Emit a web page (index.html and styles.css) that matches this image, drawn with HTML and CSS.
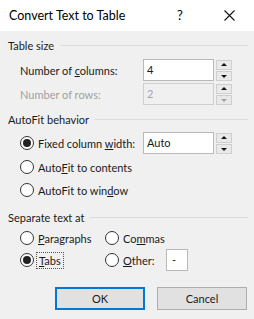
FILE: index.html
```html
<!DOCTYPE html>
<html lang="en">
<head>
    <meta charset="UTF-8">
    <meta name="viewport" content="width=device-width, initial-scale=1.0">
    <title>Convert Text to Table</title>
    <link rel="stylesheet" href="styles.css">
</head>
<body>
    <div class="dialog">
        <div class="titlebar">
            <span class="title">Convert Text to Table</span>
            <span class="help">?</span>
            <span class="close">
                <svg width="11" height="11" viewBox="0 0 11 11"><path d="M0.5 0.5 L10.5 10.5 M10.5 0.5 L0.5 10.5" stroke="#111" stroke-width="1.1" fill="none"/></svg>
            </span>
        </div>

        <div class="content">
            <div class="group-head"><span>Table size</span><i class="rule"></i></div>

            <div class="row field-row">
                <span class="label"><span class="text">Number of <u>c</u>olumns:</span></span>
                <div class="spin">
                    <span class="box">4</span>
                    <span class="arrows"><b class="up"></b><b class="down"></b></span>
                </div>
            </div>
            <div class="row field-row rows-row disabled">
                <span class="label"><span class="text">Number of rows:</span></span>
                <div class="spin">
                    <span class="box">2</span>
                    <span class="arrows"><b class="up"></b><b class="down"></b></span>
                </div>
            </div>

            <div class="group-head autofit-head"><span>AutoFit behavior</span><i class="rule"></i></div>

            <div class="row field-row fixed-row">
                <span class="label"><span class="radio checked"></span><span class="text">Fixed column <u>w</u>idth:</span></span>
                <div class="spin">
                    <span class="box">Auto</span>
                    <span class="arrows"><b class="up"></b><b class="down"></b></span>
                </div>
            </div>
            <div class="row radio-row contents-row">
                <span class="label"><span class="radio"></span><span class="text">Auto<u>F</u>it to contents</span></span>
            </div>
            <div class="row radio-row window-row">
                <span class="label"><span class="radio"></span><span class="text">AutoFit to win<u>d</u>ow</span></span>
            </div>

            <div class="group-head separate-head"><span>Separate text at</span><i class="rule"></i></div>

            <div class="row radio-row two-col">
                <span class="label col-a"><span class="radio"></span><span class="text"><u>P</u>aragraphs</span></span>
                <span class="label col-b"><span class="radio"></span><span class="text">Co<u>m</u>mas</span></span>
            </div>
            <div class="row radio-row two-col tabs-row">
                <span class="label col-a"><span class="radio checked"></span><span class="text focus"><u>T</u>abs</span></span>
                <span class="label col-b"><span class="radio"></span><span class="text"><u>O</u>ther:</span></span>
                <span class="other-box">-</span>
            </div>

            <div class="buttons">
                <button class="btn default">OK</button>
                <button class="btn">Cancel</button>
            </div>
        </div>
    </div>
</body>
</html>
```

FILE: styles.css
```css
html, body {
    margin: 0;
    padding: 0;
}
body {
    width: 254px;
    height: 319px;
    overflow: hidden;
    font-family: Lato, "Open Sans", sans-serif;
    font-size: 11px;
    color: #1a1a1a;
    background-color: #f0f0f0;
}
.dialog {
    height: 319px;
    display: flex;
    flex-direction: column;
}
.titlebar {
    height: 31px;
    background: #fff;
    display: flex;
    align-items: center;
    padding-left: 9px;
    flex-shrink: 0;
}
.title {
    font-size: 12.5px;
    flex: 1;
    margin-top: -1px;
    color: #000;
}
.help {
    font-size: 13px;
    width: 10px;
    margin-right: 37px;
    margin-top: -1px;
    color: #000;
}
.close {
    display: flex;
    margin-right: 19px;
}
.content {
    padding: 4px 6px 0 8px;
}
.group-head {
    height: 20px;
    display: flex;
    align-items: center;
}
.rule {
    flex: 1;
    height: 1px;
    background: #dcdcdc;
    margin-left: 6px;
}
.row {
    display: flex;
    align-items: center;
    padding-left: 12px;
}
.field-row {
    height: 22px;
    margin-top: 4px;
}
.rows-row {
    margin-top: 2px;
}
.label {
    display: flex;
    align-items: center;
    width: 123px;
}
.text {
    white-space: nowrap;
}
.disabled .label {
    color: #a0a0a0;
}
.spin {
    display: flex;
    align-items: center;
    height: 22px;
}
.box {
    box-sizing: border-box;
    width: 71px;
    height: 22px;
    border: 1px solid #b9b9b9;
    background: #fff;
    padding-left: 3px;
    line-height: 20px;
}
.disabled .box {
    background: #f0f0f0;
    border-color: #cfcfcf;
    color: #a6a6a6;
}
.arrows {
    display: flex;
    flex-direction: column;
    margin-left: 2px;
    gap: 1px;
}
.arrows b {
    box-sizing: border-box;
    width: 16px;
    height: 10px;
    background: #e9e9e9;
    border: 1px solid #cfcfcf;
    position: relative;
}
.arrows b::after {
    content: "";
    position: absolute;
    left: 4px;
    width: 0;
    height: 0;
    border-left: 3px solid transparent;
    border-right: 3px solid transparent;
}
.arrows .up::after {
    top: 2px;
    border-bottom: 3px solid #111;
}
.arrows .down::after {
    top: 3px;
    border-top: 3px solid #111;
}
.disabled .arrows .down::after {
    border-top-color: #a0a0a0;
}
.autofit-head {
    margin-top: 4px;
}
.fixed-row {
    margin-top: 3px;
}
.radio {
    box-sizing: border-box;
    width: 14px;
    height: 14px;
    border: 1px solid #333;
    border-radius: 50%;
    background: #fff;
    margin-right: 4px;
    display: flex;
    align-items: center;
    justify-content: center;
    flex-shrink: 0;
}
.radio.checked::after {
    content: "";
    width: 8px;
    height: 8px;
    border-radius: 50%;
    background: #222;
}
.radio-row {
    height: 22px;
}
.contents-row {
    margin-top: 2px;
}
.window-row {
    margin-top: 1px;
}
.separate-head {
    margin-top: 6px;
}
.two-col .col-a {
    width: 85px;
}
.two-col .col-b {
    width: 61px;
}
.tabs-row {
    margin-top: 0;
}
.focus {
    outline: 1px dotted #555;
    outline-offset: 1px;
    padding: 0 1px;
}
.other-box {
    box-sizing: border-box;
    width: 22px;
    height: 22px;
    border: 1px solid #b9b9b9;
    background: #fff;
    padding-left: 5px;
    line-height: 19px;
}
.buttons {
    display: flex;
    justify-content: flex-end;
    gap: 12px;
    margin-top: 16px;
    padding-right: 1px;
}
.btn {
    box-sizing: border-box;
    width: 90px;
    height: 23px;
    font-family: Lato, "Open Sans", sans-serif;
    font-size: 11px;
    color: #1a1a1a;
    background: #e1e1e1;
    border: 1px solid #adadad;
    padding: 0;
}
.btn.default {
    border: 2px solid #0078d7;
}
```
